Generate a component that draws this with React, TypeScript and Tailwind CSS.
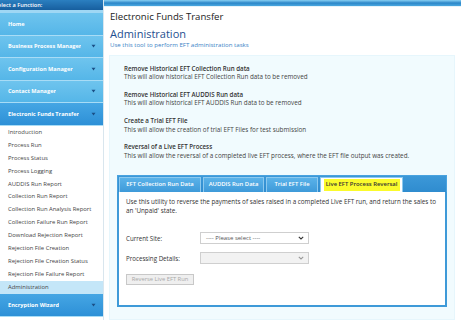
import React from "react";

const navTop = ["Home", "Business Process Manager", "Configuration Manager", "Contact Manager"];

const subItems = [
  "Introduction",
  "Process Run",
  "Process Status",
  "Process Logging",
  "AUDDIS Run Report",
  "Collection Run Report",
  "Collection Run Analysis Report",
  "Collection Failure Run Report",
  "Download Rejection Report",
  "Rejection File Creation",
  "Rejection File Creation Status",
  "Rejection File Failure Report",
  "Administration",
];

const tasks = [
  ["Remove Historical EFT Collection Run data", "This will allow historical EFT Collection Run data to be removed"],
  ["Remove Historical EFT AUDDIS Run data", "This will allow historical EFT AUDDIS Run data to be removed"],
  ["Create a Trial EFT File", "This will allow the creation of trial EFT Files for test submission"],
  ["Reversal of a Live EFT Process", "This will allow the reversal of a completed live EFT process, where the EFT file output was created."],
];

function Caret() {
  return (
    <svg width="5" height="4" viewBox="0 0 5 4" aria-hidden="true">
      <path d="M0.5 0.8 L4.5 0.8 L2.5 3.4 Z" fill="#1b4f86" />
    </svg>
  );
}

function NavItem({ label, arrow, dark }: { label: string; arrow?: boolean; dark?: boolean }) {
  return (
    <div
      className={
        "flex h-[22.5px] shrink-0 items-center justify-between border-b border-[#a8dcf6] pl-[8px] pr-[7px] text-[5.6px] font-bold text-white " +
        (dark ? "bg-linear-to-b from-[#45a6e4] to-[#2d90d7]" : "bg-linear-to-b from-[#6ec4ee] to-[#55b6e8]")
      }
    >
      <span className="truncate">{label}</span>
      {arrow && <Caret />}
    </div>
  );
}

function Chevron({ color }: { color: string }) {
  return (
    <svg width="6" height="4" viewBox="0 0 6 4" aria-hidden="true">
      <path d="M0.8 0.8 L3 3 L5.2 0.8" fill="none" stroke={color} strokeWidth="1.1" />
    </svg>
  );
}

function Select({ text, disabled }: { text?: string; disabled?: boolean }) {
  return (
    <div
      className={
        "flex h-[12px] w-[109px] items-center justify-between border border-[#cfcfcf] pl-[5px] pr-[4px] text-[6px] text-[#555] " +
        (disabled ? "bg-[#f2f2f2]" : "bg-white")
      }
    >
      <span>{text}</span>
      <Chevron color={disabled ? "#999" : "#333"} />
    </div>
  );
}

export default function App() {
  return (
    <div className="flex h-[320px] w-[461px] overflow-hidden bg-white font-['Open_Sans',sans-serif]">
      {/* sidebar */}
      <aside className="flex w-[104px] shrink-0 flex-col border-r border-[#d9e6ee] bg-white">
        <div className="flex h-[10px] shrink-0 items-center bg-linear-to-b from-[#2b7fc0] to-[#175f9f] text-[5.6px] font-semibold text-white">
          <span className="ml-[-5px] whitespace-nowrap">Select a Function:</span>
        </div>
        <div className="h-[3px] shrink-0 bg-[#9fd7f4]" />
        {navTop.map((label, i) => (
          <NavItem key={label} label={label} arrow={i > 0} />
        ))}
        <NavItem label="Electronic Funds Transfer" arrow dark />
        <div className="flex flex-col pt-[0.5px]">
          {subItems.map(label => (
            <div
              key={label}
              className={
                "flex h-[12.9px] shrink-0 items-center pl-[8px] text-[5.9px] text-[#444] " +
                (label === "Administration" ? "bg-[#c4e6f8]" : "")
              }
            >
              {label}
            </div>
          ))}
        </div>
        <div className="h-[0.5px] bg-[#1f78bd]" />
        <NavItem label="Encryption Wizard" arrow dark />
      </aside>

      {/* main content */}
      <main className="flex min-w-0 flex-1 flex-col">
        <div className="h-[6px] shrink-0 bg-linear-to-b from-[#86d0f3] via-[#2a86c8] to-[#4aa8e0]" />
        <div className="h-[1px] shrink-0 bg-[#e4f3fb]" />
        <div className="flex flex-1 flex-col pl-[5px] pr-[6px]">
          <h1 className="ml-[1px] mt-[4px] text-[9.6px] leading-[12px] text-[#222]">Electronic Funds Transfer</h1>
          <h2 className="ml-[1px] mt-[4px] text-[11px] leading-[14px] text-[#1e4f8f]">Administration</h2>
          <p className="ml-[1px] text-[6.1px] leading-[8px] text-[#3a82c6]">Use this tool to perform EFT administration tasks</p>

          <section className="mt-[6px] flex flex-1 flex-col border border-[#e6f6fc] bg-[#f1fbfe] pl-[14px] pr-[7px] pt-[8.5px]">
            {tasks.map(([title, desc]) => (
              <div key={title} className="mb-[9.3px]">
                <div className="text-[6.2px] font-semibold leading-[8.5px] text-[#333]">{title}</div>
                <div className="text-[6.3px] leading-[8.5px] text-[#444]">{desc}</div>
              </div>
            ))}

            <div className="-ml-[7px] mt-[5px] flex flex-col">
              <div className="flex h-[17px] items-end border-x border-t border-[#4aa3df] bg-linear-to-b from-[#3c98d8] to-[#2f8ccf] pl-[1px]">
                {["EFT Collection Run Data", "AUDDIS Run Data", "Trial EFT File"].map((t, i) => (
                  <div
                    key={t}
                    className={
                      "flex h-[15px] items-center justify-center border-x border-t border-[#8cc9ef] bg-linear-to-b from-[#5ab2e9] to-[#3e9ad9] text-[5.9px] font-semibold text-white " +
                      (i === 0 ? "w-[82px]" : i === 1 ? "ml-[2px] w-[61px]" : "ml-[2px] w-[52px]")
                    }
                  >
                    {t}
                  </div>
                ))}
                <div className="ml-[2px] flex h-[15px] w-[83px] items-center justify-center border-x border-t border-[#8cc9ef] bg-white">
                  <span className="flex h-[12px] w-[76px] items-center justify-center bg-[#fbfb2c] text-[5.9px] font-semibold text-[#333]">
                    Live EFT Process Reversal
                  </span>
                </div>
              </div>
              <div className="flex h-[115px] flex-col border-x-2 border-b-2 border-[#3e9ad8] bg-white pl-[7px] pt-[6.5px]">
                <p className="whitespace-nowrap text-[6.3px] leading-[8.5px] text-[#333]">
                  Use this utility to reverse the payments of sales raised in a completed Live EFT run, and return the sales to
                  <br />
                  an 'Unpaid' state.
                </p>
                <div className="mt-[17px] flex items-center">
                  <span className="w-[74px] text-[6.2px] text-[#333]">Current Site:</span>
                  <Select text="---- Please select ----" />
                </div>
                <div className="mt-[8px] flex items-center">
                  <span className="w-[74px] text-[6.2px] text-[#333]">Processing Details:</span>
                  <Select disabled />
                </div>
                <button
                  disabled
                  className="mt-[10px] flex h-[11px] w-[68px] items-center justify-center border border-[#c8c8c8] bg-[#efefef] text-[5.8px] text-[#a8a8a8]"
                >
                  Reverse Live EFT Run
                </button>
              </div>
            </div>
          </section>
        </div>
      </main>
    </div>
  );
}
